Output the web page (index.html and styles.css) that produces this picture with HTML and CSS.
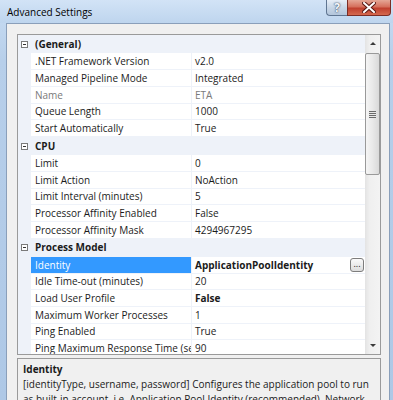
FILE: index.html
```html
<!DOCTYPE html>
<html lang="en">

<head>
    <meta charset="UTF-8">
    <meta name="viewport" content="width=device-width, initial-scale=1.0">
    <title>Advanced Settings</title>
    <link rel="stylesheet" href="styles.css">
</head>

<body>
    <div class="window">
        <div class="titlebar">
            <span class="title">Advanced Settings</span>
            <div class="caption-buttons">
                <div class="cap-btn help">?</div>
                <div class="cap-btn close">
                    <svg width="14" height="11" viewBox="0 0 14 11">
                        <path d="M2 1 L12 10 M12 1 L2 10" stroke="#5a1a14" stroke-width="4" stroke-linecap="square" />
                        <path d="M2 1 L12 10 M12 1 L2 10" stroke="#ffffff" stroke-width="2" stroke-linecap="square" />
                    </svg>
                </div>
            </div>
        </div>

        <div class="client">
            <div class="grid">
                <div class="rows">
                    <!-- (General) -->
                    <div class="category"><div class="margin"><span class="toggle"></span></div><span class="cat-name">(General)</span></div>
                    <div class="row"><div class="margin"></div><div class="label">.NET Framework Version</div><div class="value">v2.0</div></div>
                    <div class="row"><div class="margin"></div><div class="label">Managed Pipeline Mode</div><div class="value">Integrated</div></div>
                    <div class="row disabled"><div class="margin"></div><div class="label">Name</div><div class="value">ETA</div></div>
                    <div class="row"><div class="margin"></div><div class="label">Queue Length</div><div class="value">1000</div></div>
                    <div class="row"><div class="margin"></div><div class="label">Start Automatically</div><div class="value">True</div></div>

                    <!-- CPU -->
                    <div class="category"><div class="margin"><span class="toggle"></span></div><span class="cat-name">CPU</span></div>
                    <div class="row"><div class="margin"></div><div class="label">Limit</div><div class="value">0</div></div>
                    <div class="row"><div class="margin"></div><div class="label">Limit Action</div><div class="value">NoAction</div></div>
                    <div class="row"><div class="margin"></div><div class="label">Limit Interval (minutes)</div><div class="value">5</div></div>
                    <div class="row"><div class="margin"></div><div class="label">Processor Affinity Enabled</div><div class="value">False</div></div>
                    <div class="row"><div class="margin"></div><div class="label">Processor Affinity Mask</div><div class="value">4294967295</div></div>

                    <!-- Process Model -->
                    <div class="category"><div class="margin"><span class="toggle"></span></div><span class="cat-name">Process Model</span></div>
                    <div class="row selected"><div class="margin"></div><div class="label">Identity</div><div class="value"><b>ApplicationPoolIdentity</b><span class="dots">...</span></div></div>
                    <div class="row"><div class="margin"></div><div class="label">Idle Time-out (minutes)</div><div class="value">20</div></div>
                    <div class="row"><div class="margin"></div><div class="label">Load User Profile</div><div class="value"><b>False</b></div></div>
                    <div class="row"><div class="margin"></div><div class="label">Maximum Worker Processes</div><div class="value">1</div></div>
                    <div class="row"><div class="margin"></div><div class="label">Ping Enabled</div><div class="value">True</div></div>
                    <div class="row"><div class="margin"></div><div class="label">Ping Maximum Response Time (seconds)</div><div class="value">90</div></div>
                </div>

                <div class="scrollbar">
                    <div class="sb-btn"><span class="arrow-up"></span></div>
                    <div class="thumb"><span class="grip"></span></div>
                    <div class="track"></div>
                    <div class="sb-btn"><span class="arrow-down"></span></div>
                </div>
            </div>

            <div class="desc">
                <div class="desc-title">Identity</div>
                <div class="desc-text">[identityType, username, password] Configures the application pool to run<br>as built-in account, i.e. Application Pool Identity (recommended), Network</div>
            </div>
        </div>
    </div>
</body>
</html>
```

FILE: styles.css
```css
* {
    box-sizing: border-box;
}

body {
    margin: 0;
    font-family: "Open Sans", "Noto Sans", sans-serif;
    font-size: 10px;
    color: #1b1b1b;
}

.window {
    width: 393px;
    height: 400px;
    overflow: hidden;
    display: flex;
    flex-direction: column;
    background: linear-gradient(to bottom, #c9ddf3 0%, #b7cfea 15%, #aec8e6 100%);
}

/* title bar */
.titlebar {
    height: 23px;
    flex-shrink: 0;
    display: flex;
    align-items: flex-start;
    background: linear-gradient(to bottom, #d2e3f6 0%, #bed5ee 100%);
}

.title {
    margin: 5px 0 0 7px;
    font-size: 10px;
    line-height: 14px;
    color: #000;
}

.caption-buttons {
    margin-left: auto;
    margin-right: 2px;
    display: flex;
}

.cap-btn {
    height: 16px;
    display: flex;
    align-items: center;
    justify-content: center;
    border: 1px solid #5f7591;
    border-top: none;
}

.help {
    width: 21px;
    border-radius: 0 0 0 4px;
    border-right: none;
    background: linear-gradient(to bottom, #e7eef7 0%, #c8d6e6 50%, #b3c6dc 100%);
    color: #f4f7fb;
    font-weight: bold;
    font-size: 12px;
    text-shadow: 0 0 2px #3c4f68, 0 0 1px #3c4f68;
}

.close {
    width: 44px;
    border-color: #7c2d25;
    border-radius: 0 0 4px 0;
    background: linear-gradient(to bottom, #e5a796 0%, #d5705c 45%, #c0402e 55%, #d4694f 100%);
}

/* client area */
.client {
    flex: 1;
    margin: 0 3px 0 6px;
    background: #f0f0f0;
    border: 1px solid #8a9fba;
    border-bottom: none;
    padding: 10px 8px 0 10px;
    display: flex;
    flex-direction: column;
}

.grid {
    height: 321px;
    flex-shrink: 0;
    border: 1px solid #9a9a9a;
    display: flex;
    background: #fff;
}

.rows {
    flex: 1;
    overflow: hidden;
}

.row,
.category {
    display: grid;
    grid-template-columns: 13px 161px 1fr;
    height: 16.67px;
    line-height: 16px;
    white-space: nowrap;
}

.category {
    height: 18.33px;
    line-height: 18px;
    background: #eef2f9;
}

.margin {
    background: #eef2f9;
    position: relative;
}

.toggle {
    position: absolute;
    left: 3px;
    top: 6px;
    width: 7px;
    height: 7px;
    border: 1px solid #7a7a7a;
    background: #fff;
}

.toggle::after {
    content: "";
    position: absolute;
    left: 1px;
    top: 2px;
    width: 3px;
    height: 1px;
    background: #333;
}

.cat-name {
    grid-column: 2 / 4;
    padding-left: 4px;
    font-weight: bold;
}

.label {
    padding-left: 4px;
    overflow: hidden;
    border-right: 1px solid #eef2f9;
    border-bottom: 1px solid #eef2f9;
}

.value {
    padding-left: 3px;
    border-bottom: 1px solid #eef2f9;
    display: flex;
    align-items: flex-start;
}

.disabled .label,
.disabled .value {
    color: #7a7a7a;
}

.selected .label {
    background: #3399ff;
    color: #fff;
}

.dots {
    margin-left: auto;
    margin-right: 1px;
    margin-top: 1px;
    width: 14px;
    height: 14px;
    border: 1px solid #7d7d7d;
    border-radius: 3px;
    background: linear-gradient(to bottom, #fafafa 0%, #ebebeb 50%, #dcdcdc 100%);
    font-size: 9px;
    line-height: 10px;
    text-align: center;
    color: #222;
}

/* scrollbar */
.scrollbar {
    width: 15px;
    display: flex;
    flex-direction: column;
    background: linear-gradient(to right, #e3e3e3 0%, #efefef 30%, #f3f3f3 100%);
}

.sb-btn {
    height: 17px;
    display: flex;
    align-items: center;
    justify-content: center;
}

.arrow-up {
    width: 0;
    height: 0;
    border-left: 3px solid transparent;
    border-right: 3px solid transparent;
    border-bottom: 3px solid #3a3a3a;
}

.arrow-down {
    width: 0;
    height: 0;
    border-left: 3px solid transparent;
    border-right: 3px solid transparent;
    border-top: 3px solid #3a3a3a;
}

.thumb {
    height: 122px;
    margin: 1px 0 0 0;
    border: 1px solid #999;
    border-radius: 2px;
    background: linear-gradient(to right, #f5f5f5 0%, #e9e9e9 50%, #d9d9d9 100%);
    display: flex;
    align-items: center;
    justify-content: center;
}

.grip {
    width: 7px;
    height: 7px;
    background: repeating-linear-gradient(to bottom, #6a6a6a 0, #6a6a6a 1px, #e8e8e8 1px, #e8e8e8 2px);
}

.track {
    flex: 1;
}

/* description panel */
.desc {
    margin-top: 3px;
    height: 80px;
    border: 1px solid #9a9a9a;
    padding: 3px 5px;
    line-height: 15px;
    white-space: nowrap;
}

.desc-title {
    font-weight: bold;
}
```
